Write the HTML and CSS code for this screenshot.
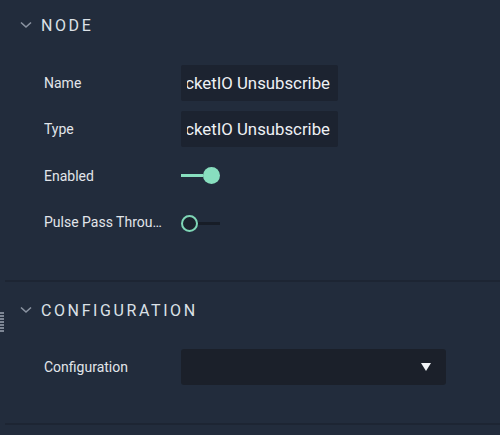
FILE: index.html
```html
<!DOCTYPE html>
<html lang="en">
<head>
    <meta charset="UTF-8">
    <title>Node Inspector</title>
    <link rel="stylesheet" href="styles.css">
</head>
<body>
    <div class="grip"></div>

    <section class="group group-node">
        <header class="group-head">
            <svg class="chevron" width="12" height="8" viewBox="0 0 12 8"><path d="M1 1.5 L6 6 L11 1.5" fill="none" stroke="#8a93a1" stroke-width="1.6"/></svg>
            <h2>NODE</h2>
        </header>
        <div class="rows">
            <div class="row">
                <label>Name</label>
                <div class="field"><div class="field-text"><span>SocketIO Unsubscribe</span></div></div>
            </div>
            <div class="row">
                <label>Type</label>
                <div class="field"><div class="field-text"><span>SocketIO Unsubscribe</span></div></div>
            </div>
            <div class="row">
                <label>Enabled</label>
                <div class="toggle on"><span class="track"></span><span class="knob"></span></div>
            </div>
            <div class="row">
                <label>Pulse Pass Through</label>
                <div class="toggle off"><span class="knob"></span><span class="track"></span></div>
            </div>
        </div>
    </section>
    <div class="divider"></div>

    <section class="group group-config">
        <header class="group-head">
            <svg class="chevron" width="12" height="8" viewBox="0 0 12 8"><path d="M1 1.5 L6 6 L11 1.5" fill="none" stroke="#8a93a1" stroke-width="1.6"/></svg>
            <h2>CONFIGURATION</h2>
        </header>
        <div class="rows">
            <div class="row">
                <label>Configuration</label>
                <div class="select">
                    <svg width="10" height="8" viewBox="0 0 10 8"><path d="M0 0 H10 L5 8 Z" fill="#f2f4f7"/></svg>
                </div>
            </div>
        </div>
    </section>
    <div class="divider"></div>
</body>
</html>
```

FILE: styles.css
```css
body {
    margin: 0;
    font-family: Roboto, "Liberation Sans", sans-serif;
    background: #222c3c;
    color: #e1e5ea;
    height: 435px;
    overflow: hidden;
}
.grip {
    position: absolute;
    left: 0;
    top: 312px;
    width: 4px;
    height: 21px;
    background: repeating-linear-gradient(to bottom, #7d8694 0 2px, transparent 2px 3px);
}
.group-head {
    height: 50px;
    display: flex;
    align-items: center;
    padding-left: 20px;
}
.chevron {
    margin-right: 9px;
}
.group-head h2 {
    margin: 0;
    font-size: 16px;
    font-weight: 400;
    letter-spacing: 2.6px;
    color: #dce1e7;
}
.group-config {
    padding-top: 3px;
}
.rows {
    display: flex;
    flex-direction: column;
    gap: 10.4px;
    padding: 15px 0 40px 44px;
}
.group-config .rows {
    padding: 14px 0 38px 44px;
}
.row {
    display: flex;
    align-items: center;
    height: 36px;
}
.row label {
    width: 118px;
    margin-right: 19px;
    font-size: 14px;
    white-space: nowrap;
    overflow: hidden;
    text-overflow: ellipsis;
}
.field {
    width: 157px;
    height: 36px;
    background: #1c2330;
    border-radius: 2px;
    display: flex;
    align-items: center;
    padding: 0 8px 0 6px;
    box-sizing: border-box;
    font-size: 16.8px;
    color: #eef1f4;
}
.field-text {
    flex: 1;
    display: flex;
    justify-content: flex-end;
    overflow: hidden;
    white-space: nowrap;
}
.field-text span {
    flex-shrink: 0;
}
.toggle {
    width: 39px;
    height: 18px;
    display: flex;
    align-items: center;
}
.toggle .knob {
    width: 17px;
    height: 17px;
    border-radius: 50%;
    box-sizing: border-box;
    flex-shrink: 0;
}
.toggle .track {
    flex: 1;
    height: 3px;
}
.toggle.on .track {
    background: #88dfbf;
}
.toggle.on .knob {
    background: #88dfbf;
}
.toggle.off {
    margin-top: 2px;
}
.toggle.off .knob {
    border: 2px solid #7fd6b6;
    background: #1b222d;
}
.toggle.off .track {
    background: #171d27;
}
.select {
    width: 265px;
    height: 36px;
    background: #1b202a;
    border-radius: 3px;
    display: flex;
    align-items: center;
    justify-content: flex-end;
    padding-right: 15px;
    box-sizing: border-box;
}
.divider {
    height: 2px;
    margin-left: 5px;
    background: #1d2533;
}
```
